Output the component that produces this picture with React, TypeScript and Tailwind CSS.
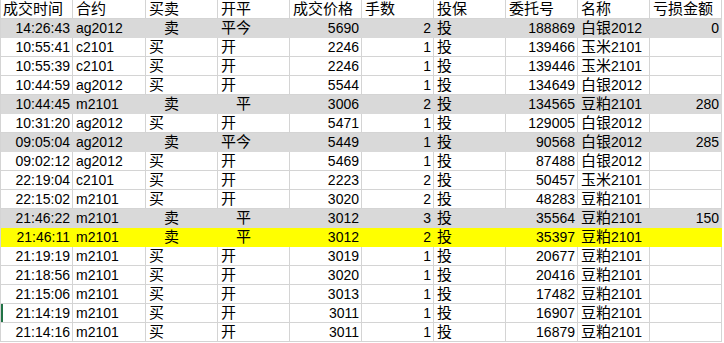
import React from "react";

type Row = {
  t: string;
  c: string;
  bs: string;
  kp: string;
  p: string;
  q: string;
  tb: string;
  id: string;
  name: string;
  loss: string;
  fill?: "gray" | "yellow";
  bsIndent?: boolean;
  kpIndent?: boolean;
  mark?: boolean;
};

const rows: Row[] = [
  { t: "14:26:43", c: "ag2012", bs: "卖", kp: "平今", p: "5690", q: "2", tb: "投", id: "188869", name: "白银2012", loss: "0", fill: "gray", bsIndent: true },
  { t: "10:55:41", c: "c2101", bs: "买", kp: "开", p: "2246", q: "1", tb: "投", id: "139466", name: "玉米2101", loss: "" },
  { t: "10:55:39", c: "c2101", bs: "买", kp: "开", p: "2246", q: "1", tb: "投", id: "139446", name: "玉米2101", loss: "" },
  { t: "10:44:59", c: "ag2012", bs: "买", kp: "开", p: "5544", q: "1", tb: "投", id: "134649", name: "白银2012", loss: "" },
  { t: "10:44:45", c: "m2101", bs: "卖", kp: "平", p: "3006", q: "2", tb: "投", id: "134565", name: "豆粕2101", loss: "280", fill: "gray", bsIndent: true, kpIndent: true },
  { t: "10:31:20", c: "ag2012", bs: "买", kp: "开", p: "5471", q: "1", tb: "投", id: "129005", name: "白银2012", loss: "" },
  { t: "09:05:04", c: "ag2012", bs: "卖", kp: "平今", p: "5449", q: "1", tb: "投", id: "90568", name: "白银2012", loss: "285", fill: "gray", bsIndent: true },
  { t: "09:02:12", c: "ag2012", bs: "买", kp: "开", p: "5469", q: "1", tb: "投", id: "87488", name: "白银2012", loss: "" },
  { t: "22:19:04", c: "c2101", bs: "买", kp: "开", p: "2223", q: "2", tb: "投", id: "50457", name: "玉米2101", loss: "" },
  { t: "22:15:02", c: "m2101", bs: "买", kp: "开", p: "3020", q: "2", tb: "投", id: "48283", name: "豆粕2101", loss: "" },
  { t: "21:46:22", c: "m2101", bs: "卖", kp: "平", p: "3012", q: "3", tb: "投", id: "35564", name: "豆粕2101", loss: "150", fill: "gray", bsIndent: true, kpIndent: true },
  { t: "21:46:11", c: "m2101", bs: "卖", kp: "平", p: "3012", q: "2", tb: "投", id: "35397", name: "豆粕2101", loss: "", fill: "yellow", bsIndent: true, kpIndent: true },
  { t: "21:19:19", c: "m2101", bs: "买", kp: "开", p: "3019", q: "1", tb: "投", id: "20677", name: "豆粕2101", loss: "" },
  { t: "21:18:56", c: "m2101", bs: "买", kp: "开", p: "3020", q: "1", tb: "投", id: "20416", name: "豆粕2101", loss: "" },
  { t: "21:15:06", c: "m2101", bs: "买", kp: "开", p: "3013", q: "1", tb: "投", id: "17482", name: "豆粕2101", loss: "" },
  { t: "21:14:19", c: "m2101", bs: "买", kp: "开", p: "3011", q: "1", tb: "投", id: "16907", name: "豆粕2101", loss: "", mark: true },
  { t: "21:14:16", c: "m2101", bs: "买", kp: "开", p: "3011", q: "1", tb: "投", id: "16879", name: "豆粕2101", loss: "" },
];

const headers = ["成交时间", "合约", "买卖", "开平", "成交价格", "手数", "投保", "委托号", "名称", "亏损金额"];

function Txt({ s }: { s: string }) {
  const parts = s.split(/([\u4e00-\u9fff]+)/).filter((x) => x.length > 0);
  return (
    <>
      {parts.map((p, i) =>
        /[\u4e00-\u9fff]/.test(p) ? (
          <span key={i} className="text-[15px]">
            {p}
          </span>
        ) : (
          <span key={i}>{p}</span>
        )
      )}
    </>
  );
}

function Cell({
  children,
  align = "left",
  fill,
  indent,
  mark,
}: {
  children?: React.ReactNode;
  align?: "left" | "right";
  fill?: "gray" | "yellow";
  indent?: boolean;
  mark?: boolean;
}) {
  const bg =
    fill === "gray"
      ? "bg-[#d9d9d9] border-[#d9d9d9]"
      : fill === "yellow"
      ? "bg-[#ffff00] border-[#ffff00]"
      : "bg-white border-[#d4d4d4]";
  const al = align === "right" ? "justify-end pr-[2px]" : indent ? "justify-start pl-[18px]" : "justify-start pl-[3px]";
  return (
    <div className={`relative flex h-[19px] items-center overflow-hidden whitespace-nowrap border-r border-b ${bg} ${al}`}>
      {mark && <div className="absolute left-[-1px] top-[-1px] h-[20px] w-[3px] bg-[#217346]" />}
      <span className="leading-[18px]">{children}</span>
    </div>
  );
}

export default function App() {
  return (
    <div className="h-[343px] w-[724px] overflow-hidden bg-white font-['Liberation_Sans','Noto_Sans_CJK_SC',sans-serif] text-[14px] text-black">
      <div className="grid w-[722px] grid-cols-[72px_73px_72px_72px_72px_72px_72px_72px_72px_72px] border-l border-[#d4d4d4]">
        {headers.map((h, i) => (
          <div
            key={h}
            className={`flex h-[19px] items-center whitespace-nowrap border-r border-b border-[#d4d4d4] bg-white ${i === 0 ? "pl-[2px]" : "pl-[3px]"}`}
          >
            <span className="leading-[18px]">
              <Txt s={h} />
            </span>
          </div>
        ))}
        {rows.map((r, i) => (
          <React.Fragment key={i}>
            <Cell align="right" fill={r.fill} mark={r.mark}>
              {r.t}
            </Cell>
            <Cell fill={r.fill}>{r.c}</Cell>
            <Cell fill={r.fill} indent={r.bsIndent}>
              <Txt s={r.bs} />
            </Cell>
            <Cell fill={r.fill} indent={r.kpIndent}>
              <Txt s={r.kp} />
            </Cell>
            <Cell align="right" fill={r.fill}>
              {r.p}
            </Cell>
            <Cell align="right" fill={r.fill}>
              {r.q}
            </Cell>
            <Cell fill={r.fill}>
              <Txt s={r.tb} />
            </Cell>
            <Cell align="right" fill={r.fill}>
              {r.id}
            </Cell>
            <Cell fill={r.fill}>
              <Txt s={r.name} />
            </Cell>
            <Cell align="right" fill={r.fill}>
              {r.loss}
            </Cell>
          </React.Fragment>
        ))}
      </div>
    </div>
  );
}
